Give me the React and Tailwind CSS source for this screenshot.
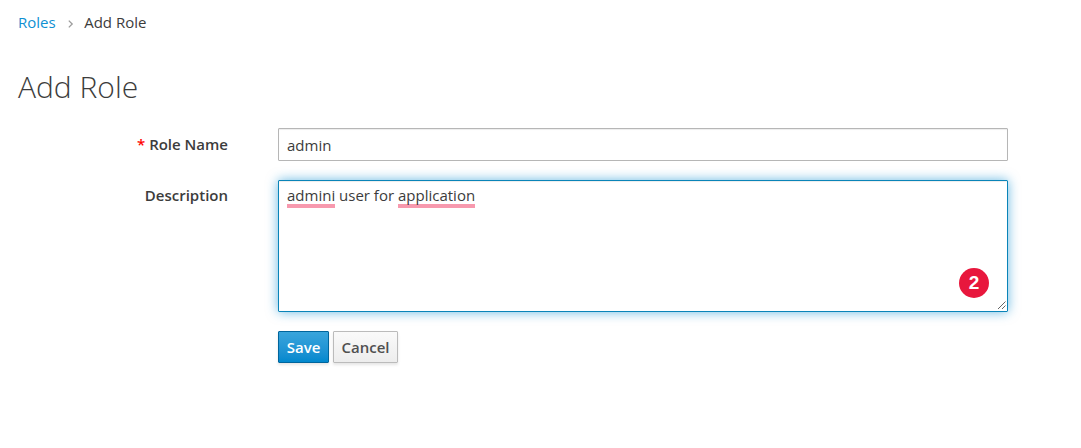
export default function App() {
  return (
    <main className="h-[448px] overflow-hidden bg-white px-[18px] pt-[12px] font-['Open_Sans',sans-serif] text-[15px] leading-5 text-[#3c3c3c]">
      <nav className="flex h-5 items-center">
        <a className="text-[#0f90d2]">Roles</a>
        <svg className="mr-[10.5px] ml-[11px] mt-[3px] h-[8px] w-[7px]" viewBox="0 0 7 8" fill="none" stroke="#9c9c9c" strokeWidth="1.3"><path d="M1.8 .6 5.2 4 1.8 7.4" /></svg>
        <span>Add Role</span>
      </nav>
      <h1 className="mt-[37px] h-9 text-[30px] font-light leading-9">Add Role</h1>
      <form className="mt-[23px]">
        <div className="flex h-[33px]">
          <label className="mr-[50px] w-[210px] pt-[6px] text-right font-semibold"><span className="text-[#f00]">*</span> Role Name</label>
          <div className="h-[33px] w-[730px] rounded-[1px] border border-[#b6b6b6] px-2 pt-[6px] shadow-[inset_0_1px_1px_rgba(3,3,3,0.075)]">admin</div>
        </div>
        <div className="mt-[19px] flex h-[132px]">
          <label className="mr-[50px] w-[210px] pt-[5px] text-right font-semibold">Description</label>
          <div className="relative w-[730px] rounded-[1px] border border-[#0a84b8] px-2 pt-[4px] shadow-[inset_0_1px_1px_rgba(3,3,3,0.075),0_0_12px_rgba(0,136,206,0.6)]">
            <span className="inline-block h-[23px] border-b-4 border-[#f799ae]">admini</span> user for <span className="inline-block h-[23px] border-b-4 border-[#f799ae]">application</span>
            <span className="absolute right-[18px] bottom-[13px] flex h-[30px] w-[30px] items-center justify-center rounded-full bg-[#e8173d] font-['Liberation_Sans',sans-serif] text-[19px] font-bold text-white">2</span>
            <svg className="absolute right-[1px] bottom-[2px] h-2 w-2" viewBox="0 0 8 8" stroke="#666" strokeWidth="1"><path d="M0 8 7.5 .5M4 8 7.5 4.5" /></svg>
          </div>
        </div>
        <div className="mt-[19px] ml-[260px] flex gap-1">
          <button type="button" className="h-8 w-[51px] rounded-[1px] border border-[#00659c] bg-linear-to-b from-[#39a5dc] to-[#0088ce] font-semibold text-white shadow-[0_2px_3px_rgba(3,3,3,0.1)]">Save</button>
          <button type="button" className="h-8 w-[65px] rounded-[1px] border border-[#bbb] bg-linear-to-b from-[#fafafa] to-[#ededed] font-semibold text-[#505050] shadow-[0_2px_3px_rgba(3,3,3,0.1)]">Cancel</button>
        </div>
      </form>
    </main>
  );
}
